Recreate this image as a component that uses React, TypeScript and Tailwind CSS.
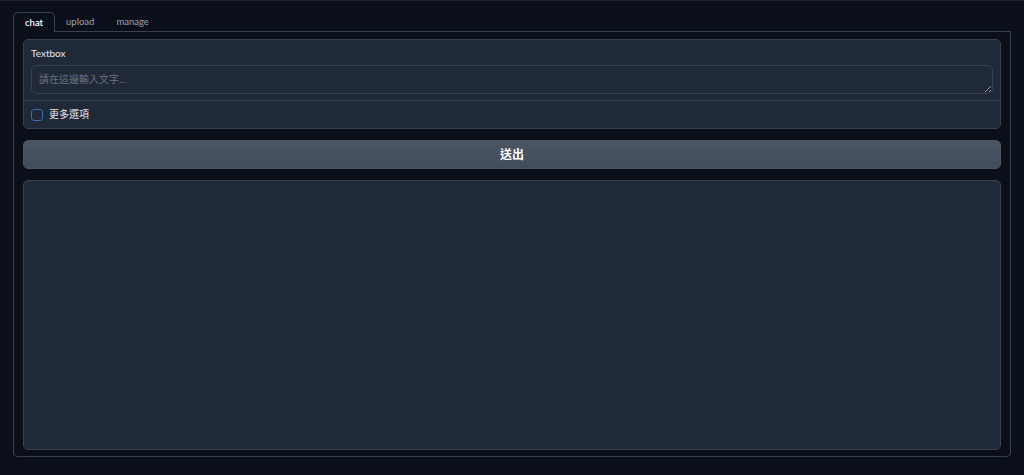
import React, { useState } from 'react';

const font = { fontFamily: 'Lato, "Noto Sans CJK TC", sans-serif' };

export default function App() {
  const [tab, setTab] = useState('chat');
  const [more, setMore] = useState(false);
  const tabs = ['chat', 'upload', 'manage'];

  return (
    <div
      className="w-full h-[475px] bg-[#0b0f19] border-t border-[#1c212c] px-[13px] pt-[11px] text-[#e5e7eb]"
      style={font}
    >
      {/* Tab header */}
      <div className="flex items-end h-[20px]">
        {tabs.map((t) =>
          t === tab ? (
            <button
              key={t}
              onClick={() => setTab(t)}
              className="h-[20px] px-[11px] text-[9.5px] font-semibold text-white border border-b-0 border-[#374151] rounded-t-[5px] leading-none"
            >
              {t}
            </button>
          ) : (
            <button
              key={t}
              onClick={() => setTab(t)}
              className="h-[20px] px-[11px] text-[9.5px] text-[#9ca3af] border-b border-[#374151] leading-none"
            >
              {t}
            </button>
          )
        )}
        <div className="flex-1 border-b border-[#374151]" />
      </div>

      {/* Tab panel */}
      <div className="h-[425px] border border-t-0 border-[#374151] rounded-b-[5px] px-[9px] pt-[7px] pb-[6px] flex flex-col gap-[11px]">
        {/* Textbox block */}
        <div className="bg-[#1f2937] border border-[#374151] rounded-[5px] flex flex-col">
          <div className="h-[60px] px-[7px] pt-[6px]">
            <div className="text-[10px] text-[#e5e7eb] leading-[14px] mb-[5px]">Textbox</div>
            <textarea
              placeholder="請在這邊輸入文字..."
              className="block w-full h-[29px] bg-[#1f2937] border border-[#374151] rounded-[6px] px-[7px] py-[6px] text-[10px] text-[#e5e7eb] placeholder:text-[#6b7280] outline-none resize-y"
              style={font}
            />
          </div>
          <div className="border-t border-[#374151] h-[28px] px-[7px] flex items-center gap-[6px]">
            <button
              onClick={() => setMore(!more)}
              className={`w-[12px] h-[12px] rounded-[3px] border border-[#3b6cb5] ${more ? 'bg-[#2563eb]' : 'bg-[#1f2937]'}`}
            />
            <span className="text-[10px] text-[#e5e7eb]">更多選項</span>
          </div>
        </div>

        {/* Submit button */}
        <button className="h-[29px] w-full rounded-[5px] border border-[#4b5563] bg-gradient-to-b from-[#4b5563] to-[#434c5a] text-white text-[12px] font-semibold">
          送出
        </button>

        {/* Output block */}
        <div className="flex-1 bg-[#1f2937] border border-[#374151] rounded-[5px]" />
      </div>
    </div>
  );
}
